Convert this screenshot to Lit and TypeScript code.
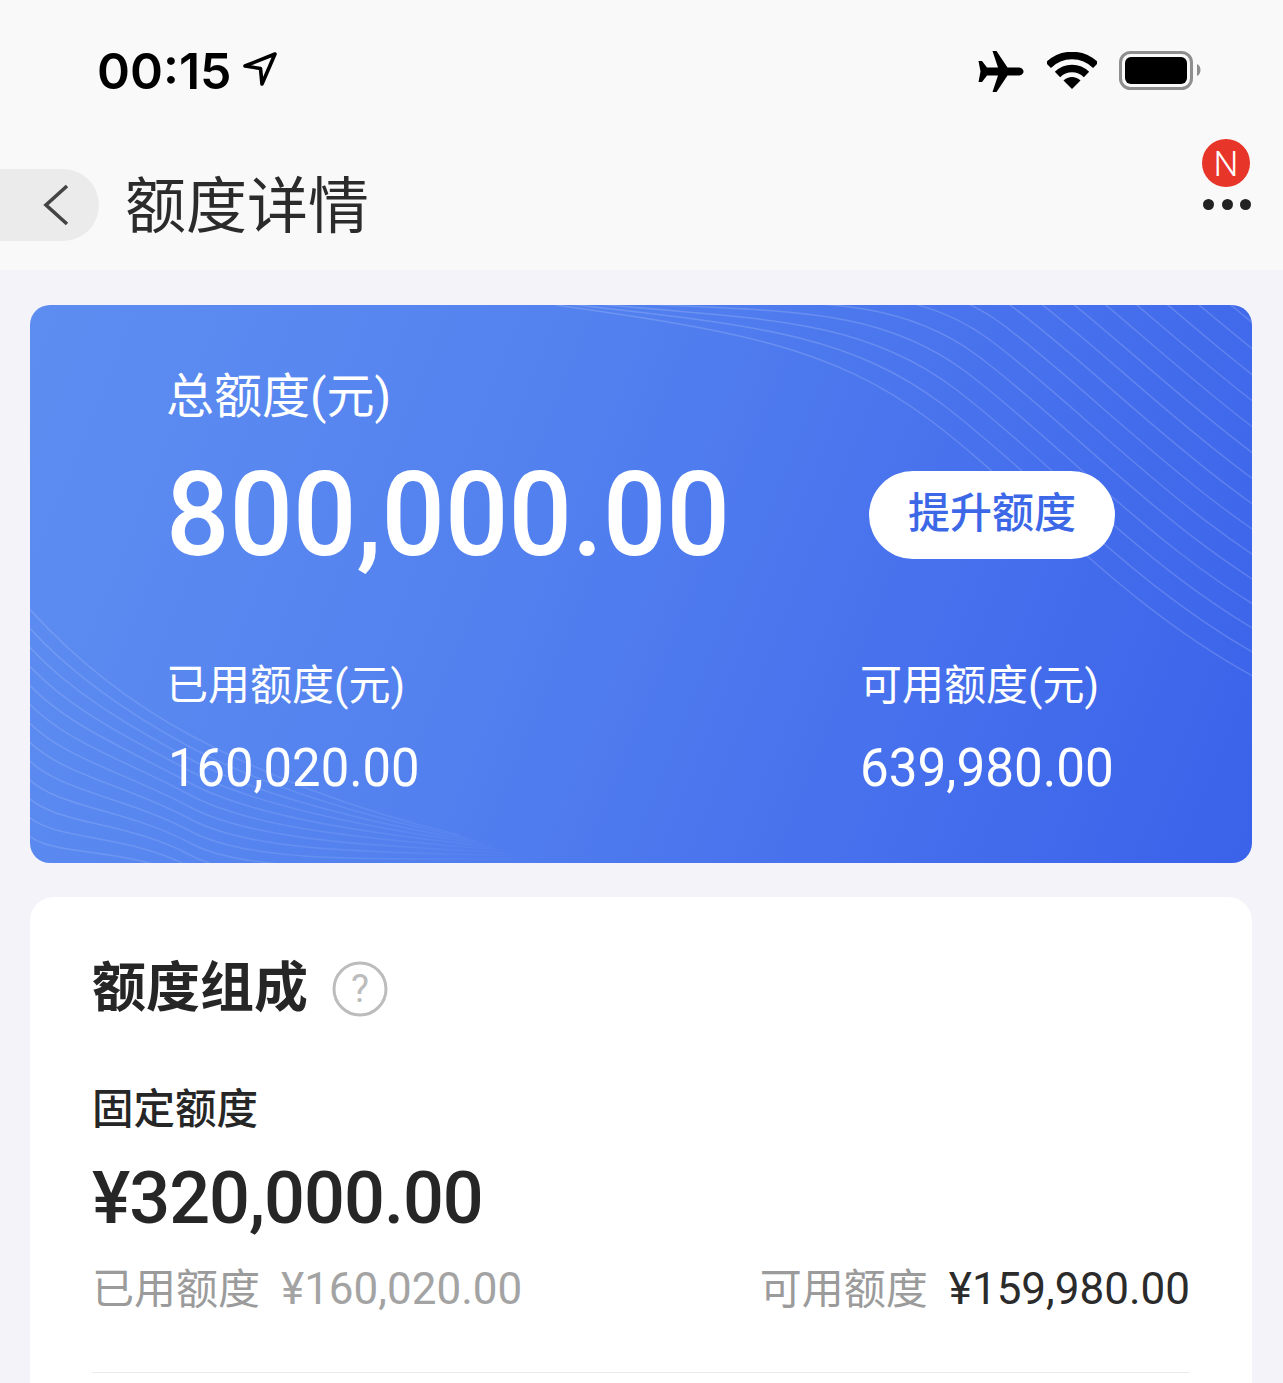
import { LitElement, html, svg, css } from 'lit';
import { customElement } from 'lit/decorators.js';

// anchor: x, y, and how far it moves per line index
type Anchor = [number, number, number, number];

const topWave: Anchor[] = [
  [526, 0, 6, -2],
  [700, 25, 8, -5],
  [800, 40, 12, -16],
  [900, 115, 12, -16],
  [1000, 190, 12, -16],
  [1100, 310, 13, -16],
  [1240, 380, 14, -16],
];

const bottomWave: Anchor[] = [
  [-6, 298, 0, 19],
  [40, 350, -2, 17],
  [95, 395, 0, 12],
  [160, 430, 0, 12],
  [225, 465, 0, 12],
  [320, 505, 6, 6],
  [430, 530, 8, 3],
];

function wavePath(anchors: Anchor[], i: number) {
  const p = anchors.map(([x, y, ox, oy]) => `${x + ox * i} ${y + oy * i}`);
  let d = `M${p[0]}`;
  for (let k = 1; k + 2 < p.length; k += 3) d += ` C${p[k]} ${p[k + 1]} ${p[k + 2]}`;
  return d;
}

@customElement('app-root')
export class AppRoot extends LitElement {
  static styles = css`
    :host {
      display: block;
      width: 1283px;
      height: 1383px;
      overflow: hidden;
      background: #f3f3f9;
      color: #262626;
      font-family: Roboto, 'Noto Sans CJK SC', sans-serif;
    }
    .top { background: #f9f9f9; }

    .status {
      height: 135px;
      box-sizing: border-box;
      padding: 47px 0 0 97px;
      display: flex;
      align-items: flex-start;
    }
    .time {
      font: 600 50px/48px Inter, sans-serif;
      color: #000;
    }
    .arrow { margin: 4px 0 0 10px; }
    .sys { margin-left: auto; display: flex; align-items: flex-start; padding: 4px 82px 0 0; }
    .wifi { margin: 1px 0 0 23px; }
    .batt { margin-left: 22px; }

    .nav { height: 135px; display: flex; align-items: flex-start; }
    .back {
      margin-top: 34px;
      width: 99px;
      height: 72px;
      background: #ebebeb;
      border-radius: 0 36px 36px 0;
      display: flex;
      align-items: center;
    }
    .title {
      margin: 36px 0 0 26px;
      font-size: 61px;
      line-height: 72px;
      font-weight: 400;
      color: #2b2b2b;
    }
    .more { margin: 4px 32px 0 auto; display: flex; flex-direction: column; align-items: center; gap: 12px; }
    .badge {
      width: 48px;
      height: 48px;
      border-radius: 50%;
      background: #e8352a;
      color: #fff;
      font-size: 35px;
      font-weight: 300;
      line-height: 51px;
      text-align: center;
    }
    .dots { display: flex; gap: 7.5px; margin-left: 2px; }
    .dots i { width: 11px; height: 11px; border-radius: 50%; background: #222; }

    .page { padding: 35px 31px 0 30px; display: flex; flex-direction: column; gap: 34px; }

    .hero {
      position: relative;
      overflow: hidden;
      height: 558px;
      box-sizing: border-box;
      padding: 62px 0 0 136px;
      border-radius: 20px;
      color: #fff;
      background: linear-gradient(112deg, #5e8df1 0%, #5382ef 38%, #4872ed 68%, #3a62ea 100%);
    }
    .waves { position: absolute; left: 0; top: 0; pointer-events: none; }
    .line { position: relative; display: grid; grid-template-columns: 694px 1fr; }
    .total { position: relative; font-size: 48px; line-height: 60px; font-weight: 400; }
    .amount-line { margin-top: 44px; height: 88px; }
    .amount {
      font-size: 117px;
      line-height: 88px;
      font-weight: 500;
      white-space: nowrap;
      transform: scaleX(.955);
      transform-origin: left;
    }
    .raise {
      margin-left: 9px;
      width: 246px;
      height: 88px;
      border-radius: 44px;
      background: #fff;
      color: #3c68e8;
      font-size: 42px;
      font-weight: 500;
      line-height: 86px;
      text-align: center;
    }
    .sub-line { margin-top: 102px; }
    .sub { font-size: 42px; line-height: 50px; font-weight: 400; white-space: nowrap; }
    .val-line { margin-top: 27px; }
    .val {
      font-size: 54px;
      line-height: 60px;
      white-space: nowrap;
      transform: scaleX(.94);
      transform-origin: left;
      margin-left: 2px;
    }
    .val.right { margin-left: 0; transform: scaleX(.948); }

    .card {
      background: #fff;
      border-radius: 24px;
      padding: 62px 62px 0;
      height: 600px;
    }
    .head { display: flex; align-items: center; height: 60px; gap: 24px; }
    .head h2 { margin: 0; font-size: 54px; line-height: 60px; font-weight: 700; }
    .fixed { margin-top: 66px; font-size: 41.5px; line-height: 50px; font-weight: 500; }
    .fixed-val { margin-top: 24px; font-size: 72px; line-height: 80px; font-weight: 500; letter-spacing: -1px; }
    .row { margin-top: 25px; display: flex; justify-content: space-between; font-size: 42px; line-height: 50px; }
    .row span { color: #9b9b9b; }
    .row b { font-weight: 400; font-size: 44px; margin-left: 21px; }
    .row .used { color: #a3a3a3; }
    .row .free { color: #2b2b2b; }
    hr { border: 0; height: 1px; background: #ebebeb; margin: 57px 0 0; }
  `;

  render() {
    return html`
      <div class="top">
        <div class="status">
          <span class="time">00:15</span>
          <svg class="arrow" width="36" height="36" viewBox="0 0 36 36" fill="none" stroke="#000" stroke-width="3.6" stroke-linejoin="round">
            <path d="M3 15 33 3 20 33 18.5 17.5Z" />
          </svg>
          <div class="sys">
            <svg width="46" height="41" viewBox="0 0 46 41">
              <path d="M45.5 20.5C45.5 23 43 24.5 40 24.5H29.5L18.5 41H14.5L20 24.5H9L4 31H.5L2.5 20.5 .5 10H4L9 16.5H20L14.5 0H18.5L29.5 16.5H40C43 16.5 45.5 18 45.5 20.5Z" />
            </svg>
            <svg class="wifi" width="50" height="38" viewBox="0 0 50 38" fill="none" stroke="#000" stroke-width="7.5">
              <path d="M1.3 13.3A33.5 33.5 0 0 1 48.7 13.3" />
              <path d="M10.5 22.5A20.5 20.5 0 0 1 39.5 22.5" />
              <path d="M16.5 28.5 25 37 33.5 28.5A12 12 0 0 0 16.5 28.5Z" fill="#000" stroke="none" />
            </svg>
            <svg class="batt" width="82" height="39" viewBox="0 0 82 39">
              <rect x="1.5" y="1.5" width="71" height="36" rx="10" fill="none" stroke="#8e8e8e" stroke-width="3" />
              <rect x="6" y="6" width="62" height="27" rx="6" />
              <path d="M78 13C80.500 14 81.500 16.500 81.500 19S80.500 24 78 25Z" fill="#8e8e8e" />
            </svg>
          </div>
        </div>
        <div class="nav">
          <div class="back">
            <svg width="99" height="72" viewBox="0 0 99 72" fill="none" stroke="#444" stroke-width="3.6">
              <path d="M67 17 46 36 67 55" />
            </svg>
          </div>
          <div class="title">额度详情</div>
          <div class="more">
            <div class="badge">N</div>
            <div class="dots"><i></i><i></i><i></i></div>
          </div>
        </div>
      </div>

      <div class="page">
        <section class="hero">
          <svg class="waves" width="1222" height="558" viewBox="0 0 1222 558" fill="none">
            <defs>
              <linearGradient id="fade" gradientUnits="userSpaceOnUse" x1="0" y1="0" x2="520" y2="0">
                <stop offset="0" stop-color="#fff" stop-opacity=".14" />
                <stop offset=".6" stop-color="#fff" stop-opacity=".09" />
                <stop offset="1" stop-color="#fff" stop-opacity="0" />
              </linearGradient>
            </defs>
            ${Array.from({ length: 32 }, (_, i) =>
              svg`<path d=${wavePath(topWave, i)} stroke="#fff" stroke-opacity=".16" stroke-width="1.5" />`)}
            ${Array.from({ length: 13 }, (_, i) =>
              svg`<path d=${wavePath(bottomWave, i)} stroke="url(#fade)" stroke-width="1.5" />`)}
          </svg>
          <div class="total">总额度(元)</div>
          <div class="line amount-line">
            <div class="amount">800,000.00</div>
            <div class="raise">提升额度</div>
          </div>
          <div class="line sub-line">
            <div class="sub">已用额度(元)</div>
            <div class="sub">可用额度(元)</div>
          </div>
          <div class="line val-line">
            <div class="val">160,020.00</div>
            <div class="val right">639,980.00</div>
          </div>
        </section>

        <section class="card">
          <div class="head">
            <h2>额度组成</h2>
            <svg width="56" height="56" viewBox="0 0 56 56" fill="none">
              <circle cx="28" cy="28" r="26" stroke="#bcbcbc" stroke-width="3" />
              <text x="28" y="41" text-anchor="middle" font-size="38" fill="#bcbcbc">?</text>
            </svg>
          </div>
          <div class="fixed">固定额度</div>
          <div class="fixed-val">¥320,000.00</div>
          <div class="row">
            <span>已用额度<b class="used">¥160,020.00</b></span>
            <span>可用额度<b class="free">¥159,980.00</b></span>
          </div>
          <hr />
        </section>
      </div>
    `;
  }
}
